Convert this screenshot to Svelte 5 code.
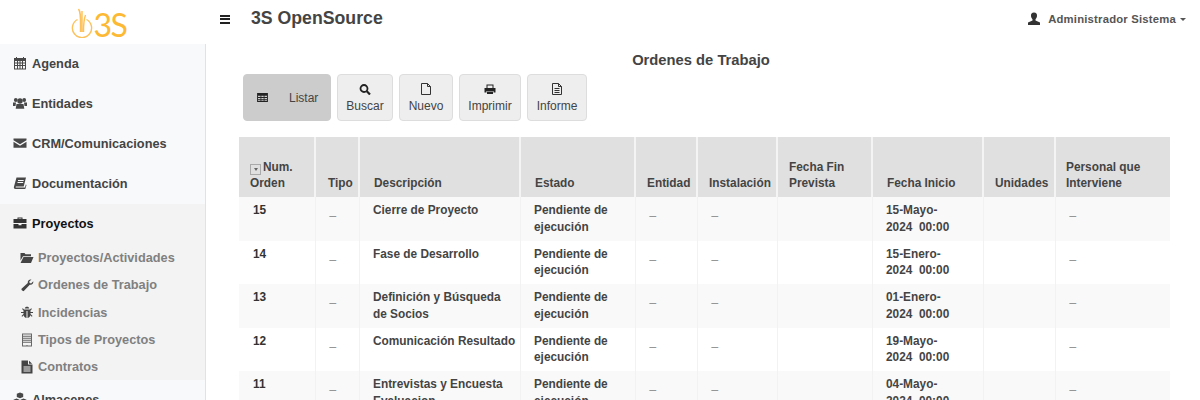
<script>
  const menu = [
    { label: 'Agenda', icon: 'calendar' },
    { label: 'Entidades', icon: 'users' },
    { label: 'CRM/Comunicaciones', icon: 'envelope' },
    { label: 'Documentación', icon: 'book' }
  ];
  const subMenu = [
    { label: 'Proyectos/Actividades', icon: 'folder' },
    { label: 'Ordenes de Trabajo', icon: 'wrench' },
    { label: 'Incidencias', icon: 'bug' },
    { label: 'Tipos de Proyectos', icon: 'list' },
    { label: 'Contratos', icon: 'file' }
  ];
  const columns = [
    { label: 'Num. Orden', width: 76, sort: true },
    { label: 'Tipo', width: 44, pad: 'mid' },
    { label: 'Descripción', width: 161, pad: 'wide' },
    { label: 'Estado', width: 115, pad: 'wide' },
    { label: 'Entidad', width: 62 },
    { label: 'Instalación', width: 80 },
    { label: 'Fecha Fin Prevista', width: 95 },
    { label: 'Fecha Inicio', width: 111, pad: 'wide' },
    { label: 'Unidades', width: 72 },
    { label: 'Personal que Interviene', width: 115, pad: 'tight' }
  ];
  const rows = [
    { num: 15, desc: 'Cierre de Proyecto', date: '15-Mayo-' },
    { num: 14, desc: 'Fase de Desarrollo', date: '15-Enero-' },
    { num: 13, desc: 'Definición y Búsqueda de Socios', date: '01-Enero-' },
    { num: 12, desc: 'Comunicación Resultado', date: '19-Mayo-' },
    { num: 11, desc: 'Entrevistas y Encuesta Evaluacion', date: '04-Mayo-' }
  ];
</script>

{#snippet icon(name)}
  <svg class="icon" viewBox="0 0 14 14" fill="currentColor" aria-hidden="true">
    {#if name === 'calendar'}
      <path fill-rule="evenodd" d="M1 2h2V1h1v1h6V1h1v1h2v11.500H1zM2 5v1.500h2V5zm3 0v1.500h1.500V5zm2.500 0v1.500H9V5zM10 5v1.500h2V5zM2 7.500V9h2V7.500zm3 0V9h1.500V7.500zm2.500 0V9H9V7.500zm2.500 0V9h2V7.500zM2 10v2.500h2V10zm3 0v2.500h1.500V10zm2.500 0v2.500H9V10zm2.500 0v2.500h2V10z" />
    {:else if name === 'users'}
      <circle cx="7" cy="5" r="2.700" /><circle cx="2.800" cy="4" r="1.900" /><circle cx="11.200" cy="4" r="1.900" />
      <path d="M3.500 8h7l.8 4.800H2.700zM0 6.500h3L2.500 10H0zM11 6.500h3V10h-2.500z" />
    {:else if name === 'envelope'}
      <path d="M.5 2.500h13v1.800L7 8.300.5 4.300zM.5 5.800 7 9.800l6.500-4v6H.5z" />
    {:else if name === 'book'}
      <path fill-rule="evenodd" d="M3.500 1.500H13l-2.300 9H3.200c-.8 0-.9 1-.2 1h9l.8-3 .7.500-1.200 4H2.500C1 13 .6 11.800 1 10.500zM5 4v1h5.500l.3-1zM4.500 6v1H10l.3-1z" />
    {:else if name === 'briefcase'}
      <path fill-rule="evenodd" d="M4.500 3V1.500h5V3h4v4H.5V3zm1 0h3v-.6h-3zM.5 8h5v1.200h3V8h5v4.500H.5z" />
    {:else if name === 'folder'}
      <path d="M.5 2h4l1 1.300h5.500v2H3L.5 9.500zM3.500 6h10L11 12H.5z" />
    {:else if name === 'wrench'}
      <path d="M13.300 3.200c.4 2-1.300 4-3.500 3.500L3.800 13c-.7.700-3-1.300-2.300-2.200L7.800 5c-.5-2 1.500-4 3.700-3.500L9.300 3.600l.3 1.500 1.500.3z" />
    {:else if name === 'bug'}
      <path d="M4.800 3.500C4.800 1 9.200 1 9.200 3.500zM4 4.500h6l1.200-1.300.7.700L10.500 5.500V7h2.500v1h-2.500v1l2 2-.7.700-1.500-1.500C10 12 8.500 13 7.500 13V6h-1v7c-1 0-2.500-1-2.800-2.800L2.200 11.700 1.500 11l2-2V8H1V7h2.500V5.500L2.100 3.900l.7-.7z" />
    {:else if name === 'list'}
      <path fill-rule="evenodd" d="M2 .5h10v13H2zm1 1v1.200h8V1.500zm0 2.200v1h8v-1zm0 2v1h8v-1zm0 2v1h8v-1zm0 2v2.800h3.500v-.6h1v.6H11V9.700z" opacity="0.8" />
    {:else if name === 'file'}
      <path fill-rule="evenodd" d="M1.500.5h6.500v4h4.500v9h-11zM9 .8l3.200 3H9zM3.500 6.500v1h7v-1zm0 2v1h7v-1zm0 2v1h7v-1z" />
    {:else if name === 'cubes'}
      <path d="M7 .5l3.200 1.300v3.200L7 6.300 3.800 5V1.800zM3.500 6.500l3 1.200V11l-3 1.300-3-1.300V7.700zM10.500 6.500l3 1.200V11l-3 1.300-3-1.300V7.700z" />
    {/if}
  </svg>
{/snippet}

<div class="layout">
  <aside class="sidebar">
    <div class="logo">
      <svg class="logo-mark" width="22" height="30" viewBox="0 0 22 30" fill="none" stroke="#fdc15a" stroke-width="1.400" aria-hidden="true">
        <path d="M6.500 11.500a9.600 9.600 0 1 0 9 0" />
        <path d="M7.500 1c2.500 3 2 8 2 23M11 3v21M14.500 7c-1.500 4-2 8-2 17" />
      </svg>
      <span class="logo-text">3S</span>
    </div>
    <nav class="menu">
      {#each menu as item}
        <div class="menu-item">{@render icon(item.icon)}{item.label}</div>
      {/each}
      <div class="menu-open">
        <div class="menu-item active">{@render icon('briefcase')}Proyectos</div>
        <div class="submenu">
          {#each subMenu as item}
            <div class="sub-item">{@render icon(item.icon)}<span>{item.label}</span></div>
          {/each}
        </div>
      </div>
      <div class="menu-item">{@render icon('cubes')}Almacenes</div>
    </nav>
  </aside>

  <main class="main">
    <header class="topbar">
      <div class="brand">
        <span class="burger"><i></i><i></i><i></i></span>
        <span class="app-name">3S OpenSource</span>
      </div>
      <div class="user">
        <svg class="user-icon" viewBox="0 0 14 14" fill="currentColor" aria-hidden="true">
          <path d="M7 .5c2.200 0 3.200 1.500 3 3.500-.1 1.300-.7 2.500-1.500 3.200v1.300l4.500 2V13H1v-2.500l4.500-2V7.200C4.700 6.500 4.100 5.300 4 4 3.800 2 4.800.5 7 .5z" />
        </svg>
        <span>Administrador Sistema</span>
        <span class="caret"></span>
      </div>
    </header>

    <h1 class="title">Ordenes de Trabajo</h1>

    <div class="toolbar">
      <button class="btn selected">
        <svg class="tool-icon" viewBox="0 0 12 10" aria-hidden="true">
          <path fill="#222" fill-rule="evenodd" d="M0 0h12v10H0zm1 3v1.500h2.800V3zm3.700 0v1.500h2.600V3zm3.500 0v1.500H11V3zM1 5.500V7h2.800V5.500zm3.700 0V7h2.600V5.500zm3.500 0V7H11V5.500zM1 8v1h2.800V8zm3.700 0v1h2.600V8zm3.500 0v1H11V8z" />
        </svg>
        <span>Listar</span>
      </button>
      <button class="btn w-buscar">
        <svg class="tool-svg" viewBox="0 0 12 12" aria-hidden="true">
          <circle cx="5" cy="5.500" r="3.500" fill="none" stroke="#222" stroke-width="1.800" />
          <path d="M7.800 8.300 11 11.500" stroke="#222" stroke-width="2.200" />
        </svg>
        Buscar
      </button>
      <button class="btn w-nuevo">
        <svg class="tool-svg" viewBox="0 0 12 12" fill="none" stroke="#333" aria-hidden="true">
          <path d="M1.500.5h6l3 3v8h-9zM7.500.5v3h3" />
        </svg>
        Nuevo
      </button>
      <button class="btn w-imprimir">
        <svg class="tool-svg" viewBox="0 0 12 12" aria-hidden="true">
          <path fill="#222" fill-rule="evenodd" d="M2.500 1.500h7v3.500h2v4.500H9.500V8h-7v1.500H.5V5h2zm1 1V5h5V2.500zM3 8.500h6V11H3z" />
        </svg>
        Imprimir
      </button>
      <button class="btn w-informe">
        <svg class="tool-svg" viewBox="0 0 12 12" fill="none" stroke="#333" aria-hidden="true">
          <path d="M1.500.5h6l3 3v8h-9zM7.500.5v3h3M3.500 5.500h5M3.500 7.500h5M3.500 9.500h5" />
        </svg>
        Informe
      </button>
    </div>

    <table class="grid">
      <colgroup>
        {#each columns as col}
          <col style="width: {col.width}px" />
        {/each}
      </colgroup>
      <thead>
        <tr>
          {#each columns as col}
            <th class={col.pad}>{#if col.sort}<span class="sort"></span>{/if}{col.label}</th>
          {/each}
        </tr>
      </thead>
      <tbody>
        {#each rows as row}
          <tr>
            <td class="num">{row.num}</td>
            <td class="dash">_</td>
            <td>{row.desc}</td>
            <td>Pendiente de ejecución</td>
            <td class="dash">_</td>
            <td class="dash">_</td>
            <td></td>
            <td>{row.date}<br />2024&nbsp; 00:00</td>
            <td></td>
            <td class="dash">_</td>
          </tr>
        {/each}
      </tbody>
    </table>
  </main>
</div>

<style>
  :global(body) {
    margin: 0;
    background: #fff;
  }
  .layout {
    display: flex;
    height: 400px;
    overflow: hidden;
    font-family: "Liberation Sans", Arial, sans-serif;
    color: #444;
  }

  /* Sidebar */
  .sidebar {
    width: 205px;
    flex-shrink: 0;
    background: #f8f9fb;
    border-right: 1px solid #dfe3e8;
  }
  .logo {
    height: 44px;
    background: #fff;
    margin-right: -1px;
    display: flex;
    align-items: center;
    justify-content: center;
    gap: 1px;
    padding-right: 9px;
    box-sizing: border-box;
  }
  .logo-mark {
    margin-top: 1px;
  }
  .logo-text {
    font-family: Lato, sans-serif;
    font-size: 32px;
    letter-spacing: -1.500px;
    color: #fdb933;
    line-height: 1;
    margin-top: 6px;
  }
  .menu-item {
    display: flex;
    align-items: center;
    gap: 5px;
    height: 40px;
    box-sizing: border-box;
    padding: 0 0 2px 13px;
    font-size: 12.750px;
    font-weight: bold;
  }
  .menu-item.active {
    color: #111;
  }
  .menu-item.active .icon {
    color: #333;
  }
  .icon {
    width: 14px;
    height: 14px;
    flex-shrink: 0;
    color: #484848;
  }
  .menu-open {
    background: #f3f3f3;
    height: 176px;
  }
  .sub-item {
    display: flex;
    align-items: center;
    gap: 4px;
    height: 27.300px;
    padding-left: 20px;
    font-size: 12.750px;
    font-weight: bold;
    color: #808080;
  }
  .sub-item .icon {
    color: #444;
  }

  /* Main */
  .main {
    flex: 1;
    min-width: 0;
  }
  .topbar {
    display: flex;
    justify-content: space-between;
    height: 38px;
    padding: 0 14px 0 14px;
    align-items: center;
  }
  .brand {
    display: flex;
    align-items: center;
    gap: 21px;
  }
  .burger {
    display: flex;
    flex-direction: column;
    gap: 1.500px;
    width: 10px;
  }
  .burger i {
    height: 2px;
    background: #222;
  }
  .app-name {
    font-size: 17.700px;
    font-weight: bold;
    color: #444;
    margin-top: -2px;
  }
  .user {
    display: flex;
    align-items: center;
    gap: 6px;
    font-size: 11.300px;
    font-weight: bold;
    letter-spacing: 0.2px;
    color: #555;
  }
  .user-icon {
    width: 14px;
    height: 14px;
    color: #333;
    margin-right: 1px;
  }
  .caret {
    border-top: 3px solid #555;
    border-left: 3px solid transparent;
    border-right: 3px solid transparent;
    margin: 1px 0 0 -2px;
  }
  .title {
    margin: 12px 0 0;
    padding-right: 4px;
    font-size: 14.750px;
    line-height: 20px;
    text-align: center;
    color: #444;
  }
  .toolbar {
    display: flex;
    gap: 6px;
    padding-left: 37px;
    margin-top: 4px;
  }
  .btn {
    display: flex;
    flex-direction: column;
    align-items: center;
    gap: 4px;
    height: 47px;
    padding: 8px 0 0;
    box-sizing: border-box;
    background: #eee;
    border: 1px solid #ddd;
    border-radius: 4px;
    font-family: inherit;
    font-size: 12px;
    line-height: 14px;
    color: #444;
  }
  .btn.selected {
    width: 88px;
    flex-direction: row;
    gap: 21px;
    padding: 0 0 0 13px;
    background: #ccc;
    border-color: #ccc;
  }
  .w-buscar { width: 56px; }
  .w-nuevo { width: 54px; }
  .w-imprimir { width: 62px; }
  .w-informe { width: 60px; }
  .tool-icon {
    width: 11px;
    height: 9px;
  }
  .tool-svg {
    width: 12px;
    height: 12px;
  }

  /* Table */
  .grid {
    margin: 16px 0 0 33px;
    width: 931px;
    table-layout: fixed;
    border-collapse: collapse;
    font-size: 11.850px;
    line-height: 16.500px;
  }
  .grid th {
    height: 60px;
    box-sizing: border-box;
    padding: 0 2px 6px 11px;
    background: #e0e0e0;
    border-left: 2px solid #f4f4f4;
    vertical-align: bottom;
    text-align: left;
    font-weight: bold;
    line-height: 16px;
    color: #444;
  }
  .grid th:first-child {
    border-left: 0;
  }
  .grid th.mid { padding-left: 12px; }
  .grid th.wide { padding-left: 14px; }
  .grid th.tight { padding-left: 10px; }
  .sort {
    display: inline-flex;
    align-items: center;
    justify-content: center;
    width: 9px;
    height: 9px;
    border: 1px solid #aaa;
    margin-right: 2px;
    vertical-align: 0;
  }
  .sort::after {
    content: "";
    border-top: 3px solid #666;
    border-left: 2.500px solid transparent;
    border-right: 2.500px solid transparent;
  }
  .grid td {
    height: 43.600px;
    box-sizing: border-box;
    padding: 5px 4px 0 13.500px;
    border-left: 1px solid #f2f2f2;
    vertical-align: top;
    font-weight: bold;
    color: #444;
  }
  .grid td:first-child {
    border-left: 0;
    padding-left: 14px;
  }
  .grid tbody tr:nth-child(odd) td {
    background: #f9f9f9;
  }
  .grid td.num {
    color: #333;
  }
  .grid td.dash {
    padding-left: 14px;
    font-weight: normal;
    color: #888;
  }
</style>
